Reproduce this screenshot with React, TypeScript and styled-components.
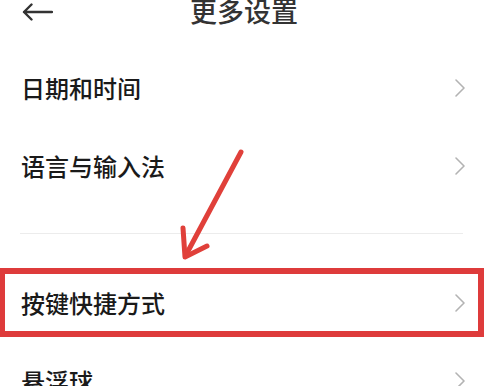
import React from 'react';
import styled, { createGlobalStyle } from 'styled-components';

const GlobalStyle = createGlobalStyle`
  html, body {
    margin: 0;
    padding: 0;
    background: #ffffff;
  }
  body {
    font-family: "Noto Sans CJK SC", "Noto Sans", sans-serif;
    overflow: hidden;
  }
`;

const Page = styled.div`
  position: relative;
  width: 488px;
  height: 386px;
  overflow: hidden;
  background: #ffffff;
`;

const Header = styled.div`
  position: relative;
  display: flex;
  align-items: center;
  justify-content: center;
  height: 20px;
  margin-bottom: 29px;
`;

const BackButton = styled.div`
  position: absolute;
  left: 22px;
  top: 3px;
  width: 31px;
  height: 18px;
  display: flex;
  align-items: center;
`;

const Title = styled.div`
  font-size: 27px;
  line-height: 27px;
  font-weight: 500;
  color: #333333;
  letter-spacing: 0;
`;

const Group = styled.div`
  display: flex;
  flex-direction: column;
`;

const Row = styled.div<{ $highlighted?: boolean }>`
  position: relative;
  display: flex;
  align-items: center;
  justify-content: space-between;
  height: 78px;
  padding: 0 21px 0 21px;

  &::after {
    content: '';
    display: ${p => (p.$highlighted ? 'block' : 'none')};
    position: absolute;
    top: 4px;
    bottom: 5px;
    left: -1px;
    right: 4px;
    border: 6px solid #de3b3b;
  }
`;

const Label = styled.span`
  font-size: 24px;
  line-height: 24px;
  font-weight: 500;
  color: #1a1a1a;
`;

const Divider = styled.div`
  height: 1px;
  margin: 28px 25px 30px 20px;
  background: #ececec;
`;

const Pointer = styled.svg`
  position: absolute;
  left: 0;
  top: 0;
  pointer-events: none;
`;

const Chevron = () => (
  <svg width="14" height="20" viewBox="0 0 14 20" style={{ marginRight: 0 }}>
    <path d="M3 2 L11 10 L3 18" fill="none" stroke="#b3b3b3" strokeWidth="1.6" strokeLinecap="round" strokeLinejoin="round" />
  </svg>
);

const items = [
  { label: '日期和时间' },
  { label: '语言与输入法' },
];

const items2 = [
  { label: '按键快捷方式', highlighted: true },
  { label: '悬浮球' },
];

const App = () => {
  return (
    <Page>
      <GlobalStyle />
      <Header>
        <BackButton>
          <svg width="31" height="18" viewBox="0 0 31 18">
            <path d="M30 9 H2 M9.5 1.5 L2 9 L9.5 16.5" fill="none" stroke="#333333" strokeWidth="2.4" strokeLinecap="round" strokeLinejoin="round" />
          </svg>
        </BackButton>
        <Title>更多设置</Title>
      </Header>

      <Group>
        {items.map(item => (
          <Row key={item.label}>
            <Label>{item.label}</Label>
            <Chevron />
          </Row>
        ))}
      </Group>

      <Divider />

      <Group>
        {items2.map(item => (
          <Row key={item.label} $highlighted={item.highlighted}>
            <Label>{item.label}</Label>
            <Chevron />
          </Row>
        ))}
      </Group>

      <Pointer width="488" height="386" viewBox="0 0 488 386">
        <path d="M241 152 L187 253" fill="none" stroke="#e0403a" strokeWidth="5" strokeLinecap="round" />
        <path d="M183 228 L185 257 L207 246" fill="none" stroke="#e0403a" strokeWidth="5" strokeLinecap="round" strokeLinejoin="round" />
      </Pointer>
    </Page>
  );
};

export default App;
